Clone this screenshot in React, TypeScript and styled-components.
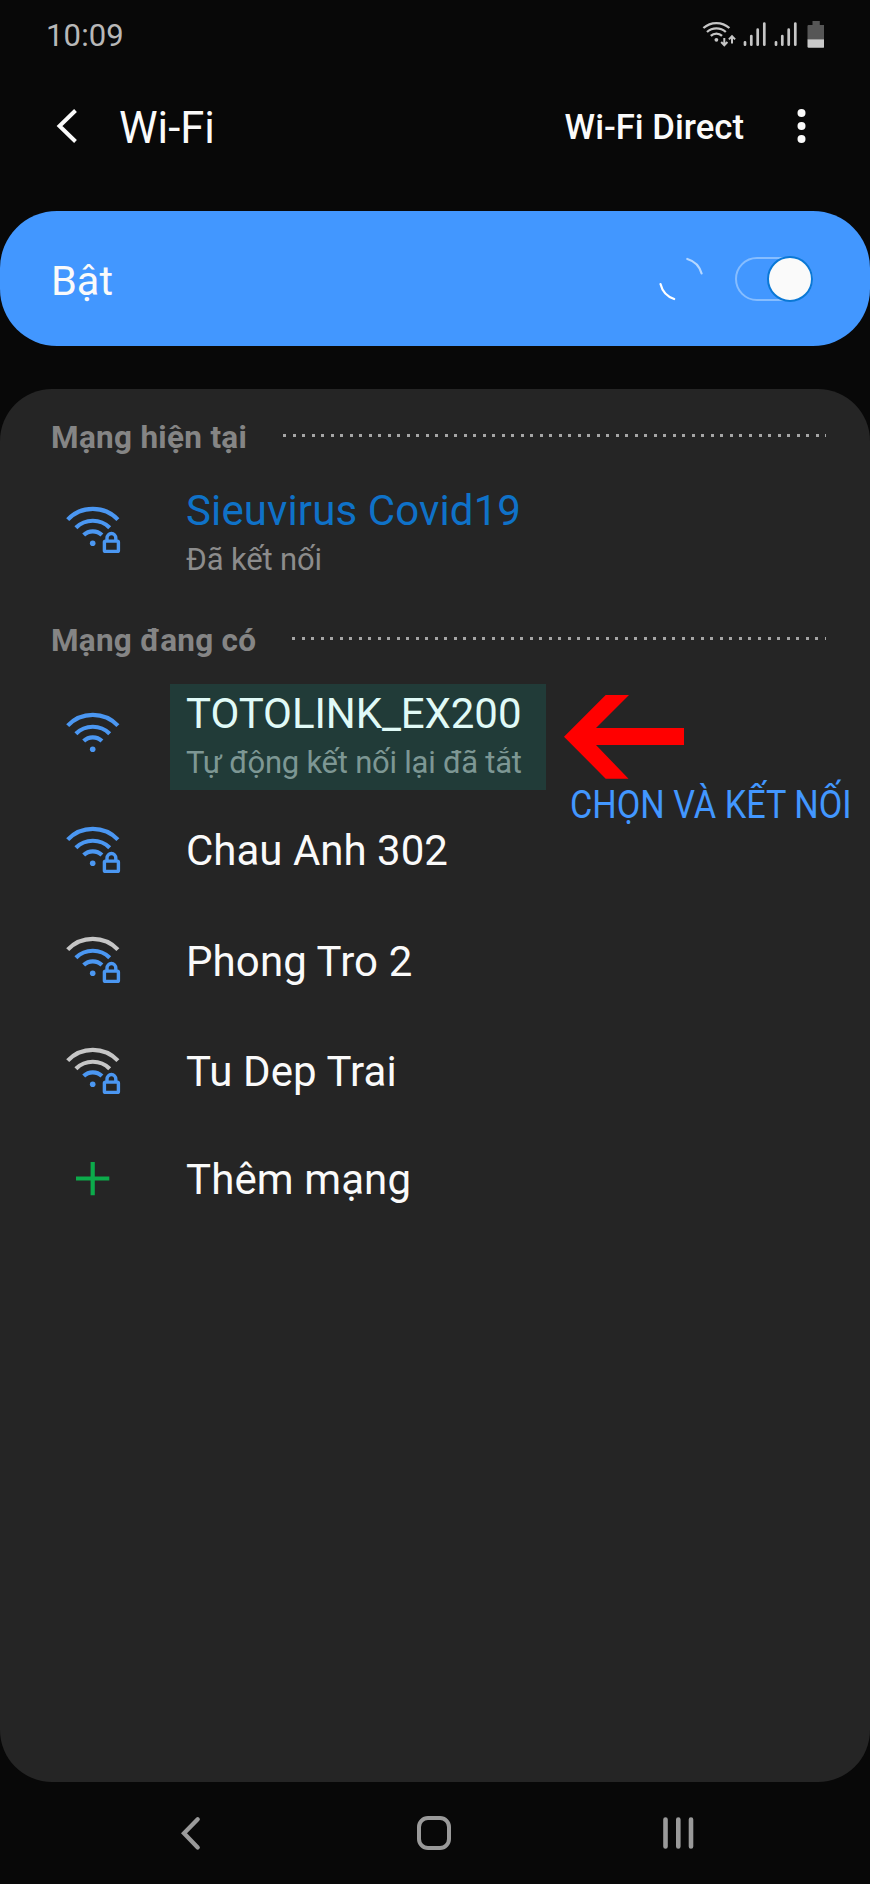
import React from "react";
import styled, { createGlobalStyle } from "styled-components";

const BLUE = "#4b97f2";
const GREY = "#c6c6c6";

const GlobalStyle = createGlobalStyle`
  * { box-sizing: border-box; }
  body { margin: 0; background: #080808; }
  svg { display: block; flex: none; }
`;

const Screen = styled.main`
  width: 870px;
  height: 1884px;
  overflow: hidden;
  display: flex;
  flex-direction: column;
  background: #080808;
  color: #fafafa;
  font-family: Roboto, "Noto Sans", sans-serif;
  white-space: nowrap;
`;

const StatusBar = styled.header`
  height: 72px;
  padding: 0 46px 0 46px;
  display: flex;
  align-items: center;
  justify-content: space-between;
`;

const Clock = styled.span`
  font-size: 31px;
  line-height: 36px;
  color: #b8b8b8;
  letter-spacing: 0.15px;
`;

const StatusIcons = styled.div`
  display: flex;
  gap: 6px;
  padding-bottom: 4px;
`;

const AppBar = styled.div`
  height: 108px;
  margin-bottom: 31px;
  padding: 0 64px 0 56px;
  display: flex;
  align-items: center;
`;

const Title = styled.h1`
  margin: 0 auto 0 41px;
  padding-top: 5px;
  font-size: 43.5px;
  line-height: 50px;
  font-weight: 400;
`;

const DirectButton = styled.button`
  border: 0;
  padding: 1px 0 0;
  margin-right: 53px;
  background: none;
  color: inherit;
  font: 500 34.7px/40px Roboto, sans-serif;
`;

const MasterSwitch = styled.section`
  height: 135px;
  border-radius: 57px;
  padding: 0 57px 0 51px;
  background: #4297ff;
  display: flex;
  align-items: center;
`;

const SwitchLabel = styled.span`
  margin-right: auto;
  padding-top: 4px;
  font-size: 41.5px;
  line-height: 50px;
`;

const Track = styled.div`
  width: 78px;
  height: 44px;
  margin-left: 32px;
  border: 2px solid #86bdff;
  border-radius: 22px;
  display: flex;
  align-items: center;
  justify-content: flex-end;
`;

const Thumb = styled.div`
  flex: none;
  width: 46px;
  height: 46px;
  margin-right: -2px;
  border: 2px solid #0a78d6;
  border-radius: 50%;
  background: #fafafa;
`;

const Panel = styled.section`
  height: 1393px;
  margin-top: 43px;
  border-radius: 52px;
  background: #252525;
`;

const SectionHeader = styled.div`
  height: 97px;
  padding: 0 44px 0 51px;
  display: flex;
  align-items: center;
`;

const SectionTitle = styled.h2<{ $spacing: number }>`
  margin: 0;
  font-size: 31.5px;
  line-height: 40px;
  font-weight: 700;
  color: #858585;
  letter-spacing: ${(p) => p.$spacing}px;
`;

const DottedRule = styled.div<{ $width: number }>`
  width: ${(p) => p.$width}px;
  height: 3px;
  margin: 0 0 4px auto;
  background: repeating-linear-gradient(90deg, #a6a6a6 0 3px, transparent 3px 9.51px);
`;

const Row = styled.div<{ $height: number }>`
  position: relative;
  height: ${(p) => p.$height}px;
  padding-left: 66px;
  display: flex;
  align-items: center;
`;

const TallRow = styled(Row)`
  align-items: flex-start;
`;

const IconSlot = styled.div<{ $top?: number }>`
  width: 120px;
  flex: none;
  padding-top: ${(p) => p.$top ?? 0}px;
`;

const Labels = styled.div`
  display: flex;
  flex-direction: column;
`;

const Name = styled.span<{ $color?: string; $spacing?: number }>`
  font-size: 42px;
  line-height: 49px;
  color: ${(p) => p.$color ?? "#fafafa"};
  letter-spacing: ${(p) => p.$spacing ?? 0}px;
`;

const Detail = styled.span<{ $spacing?: number }>`
  font-size: 31px;
  line-height: 50px;
  color: #8c8c8c;
  letter-spacing: ${(p) => p.$spacing ?? -0.15}px;
`;

const Highlight = styled.div`
  position: absolute;
  left: 170px;
  top: -5px;
  width: 376px;
  height: 106px;
  background: rgba(0, 255, 230, 0.1);
`;

const Pointer = styled.svg`
  position: absolute;
  left: 564px;
  top: 6px;
`;

const Callout = styled.span`
  position: absolute;
  left: 569.5px;
  top: 94px;
  font-size: 38.5px;
  line-height: 44px;
  color: #4297ff;
  transform: scaleX(0.89);
  transform-origin: 0 50%;
`;

const NavBar = styled.nav`
  height: 102px;
  padding: 0 176px 0 180px;
  display: flex;
  align-items: center;
  justify-content: space-between;
`;

function StatusWifi() {
  return (
    <svg width="35" height="28" viewBox="0 0 35 28" fill="none" stroke="#c6c6c6" strokeWidth="2.3">
      <path d="M1.4 8A19.5 19.5 0 0 1 27.4 8M5 12A14 14 0 0 1 23.8 12M8.8 15.9A8 8 0 0 1 20 15.9" />
      <circle cx="14.4" cy="19.8" r="1.9" fill="#c6c6c6" stroke="none" />
      <path d="M22.3 18V25M19.2 22L22.3 25.2L25.4 22M30 23.6V16.5M26.9 19.4L30 16.2L33.1 19.4" strokeWidth="2" />
    </svg>
  );
}

function Signal() {
  return (
    <svg width="25.5" height="28" viewBox="0 0 25.5 28" stroke="#c6c6c6" strokeWidth="2.7" strokeLinecap="round">
      <path d="M2 22.3V24.7M8.3 16V24.7M14.7 9.7V24.7M21.3 3.6V24.7" />
    </svg>
  );
}

function Battery() {
  return (
    <svg width="18.5" height="28" viewBox="-1.5 0 18.5 28">
      <path d="M5 1H12.3V5H16a1 1 0 0 1 1 1V19.3H0V6a1 1 0 0 1 1-1H5Z" fill="#565656" />
      <path d="M0 19.3H17V26.5a1.2 1.2 0 0 1-1.2 1.2H1.2A1.2 1.2 0 0 1 0 26.5Z" fill="#c9c9c9" />
    </svg>
  );
}

function WifiIcon({ level = 3, locked = false }: { level?: number; locked?: boolean }) {
  return (
    <svg width="55" height="50" viewBox="0 0 55 50" fill="none" strokeWidth="4.2">
      <path d="M1.7 13.6A34.6 34.6 0 0 1 51.9 13.6" stroke={level > 2 ? BLUE : GREY} />
      <path d="M9.9 21.7A24 24 0 0 1 43.7 21.7" stroke={level > 1 ? BLUE : GREY} />
      <path d="M17.7 29A13 13 0 0 1 35.9 29" stroke={BLUE} />
      <circle cx="26.7" cy="37.2" r="2.8" fill={BLUE} />
      {locked && (
        <g stroke={BLUE} strokeWidth="3.4">
          <rect x="38.4" y="35.1" width="14" height="10.3" rx="1" />
          <path d="M41 35V32.1a4.4 4.6 0 0 1 8.8 0V35" />
        </g>
      )}
    </svg>
  );
}

export default function App() {
  return (
    <Screen>
      <GlobalStyle />
      <StatusBar>
        <Clock>10:09</Clock>
        <StatusIcons>
          <StatusWifi />
          <Signal />
          <Signal />
          <Battery />
        </StatusIcons>
      </StatusBar>

      <AppBar>
        <svg width="22" height="34" viewBox="0 0 22 34" fill="none" stroke="#fafafa" strokeWidth="4">
          <path d="M19.5 1.5L3.5 17L19.5 32.5" />
        </svg>
        <Title>Wi-Fi</Title>
        <DirectButton>Wi-Fi Direct</DirectButton>
        <svg width="9" height="34" viewBox="0 0 9 34" fill="#fafafa">
          <circle cx="4.5" cy="4" r="4" />
          <circle cx="4.5" cy="17" r="4" />
          <circle cx="4.5" cy="30" r="4" />
        </svg>
      </AppBar>

      <MasterSwitch>
        <SwitchLabel>Bật</SwitchLabel>
        <svg width="44" height="44" viewBox="0 0 44 44" fill="none" strokeWidth="2.2" strokeLinecap="round">
          <path d="M28.3 2A21 21 0 0 1 42.6 16.5" stroke="#b5d7ff" />
          <path d="M1.5 27A21 21 0 0 0 15.2 42" stroke="#fff" />
        </svg>
        <Track>
          <Thumb />
        </Track>
      </MasterSwitch>

      <Panel>
        <SectionHeader>
          <SectionTitle $spacing={0.3}>Mạng hiện tại</SectionTitle>
          <DottedRule $width={543.5} />
        </SectionHeader>
        <TallRow $height={106}>
          <IconSlot $top={20}>
            <WifiIcon locked />
          </IconSlot>
          <Labels>
            <Name $color="#0f72c8" $spacing={0.12}>Sieuvirus Covid19</Name>
            <Detail>Đã kết nối</Detail>
          </Labels>
        </TallRow>

        <SectionHeader>
          <SectionTitle $spacing={0.25}>Mạng đang có</SectionTitle>
          <DottedRule $width={534} />
        </SectionHeader>
        <TallRow $height={106}>
          <IconSlot $top={23}>
            <WifiIcon />
          </IconSlot>
          <Labels>
            <Name $spacing={-0.08}>TOTOLINK_EX200</Name>
            <Detail $spacing={-0.24}>Tự động kết nối lại đã tắt</Detail>
          </Labels>
          <Highlight />
          <Pointer width="120" height="84" viewBox="0 0 120 84" fill="#f00">
            <path d="M0 41.7L41.7 0H65L32 33H120V50H32L64.5 83.7H41.7Z" />
          </Pointer>
          <Callout>CHỌN VÀ KẾT NỐI</Callout>
        </TallRow>

        <Row $height={111}>
          <IconSlot>
            <WifiIcon locked />
          </IconSlot>
          <Name>Chau Anh 302</Name>
        </Row>
        <Row $height={110.5}>
          <IconSlot>
            <WifiIcon level={2} locked />
          </IconSlot>
          <Name $spacing={0.1}>Phong Tro 2</Name>
        </Row>
        <Row $height={110}>
          <IconSlot>
            <WifiIcon level={1} locked />
          </IconSlot>
          <Name $spacing={0.1}>Tu Dep Trai</Name>
        </Row>
        <Row $height={106}>
          <IconSlot>
            <svg width="54" height="36" viewBox="0 0 54 36" stroke="#0cab4b" strokeWidth="4.2">
              <path d="M10 16.5H43.3M26.7 0V33.2" />
            </svg>
          </IconSlot>
          <Name $spacing={0.1}>Thêm mạng</Name>
        </Row>
      </Panel>

      <NavBar>
        <svg width="26" height="36" viewBox="0 0 26 36" fill="none" stroke="#9a9a9a" strokeWidth="4.3" strokeLinecap="round">
          <path d="M17.7 4.2L4 18.3L17.7 32.4" />
        </svg>
        <svg width="34" height="34" viewBox="0 0 34 34" fill="none" stroke="#9a9a9a" strokeWidth="4">
          <rect x="2" y="2" width="30" height="30" rx="9" />
        </svg>
        <svg width="32" height="34" viewBox="0 0 32 34" stroke="#9a9a9a" strokeWidth="4.6" strokeLinecap="round">
          <path d="M3.5 3.5V30.5M16.3 3.5V30.5M29 3.5V30.5" />
        </svg>
      </NavBar>
    </Screen>
  );
}
